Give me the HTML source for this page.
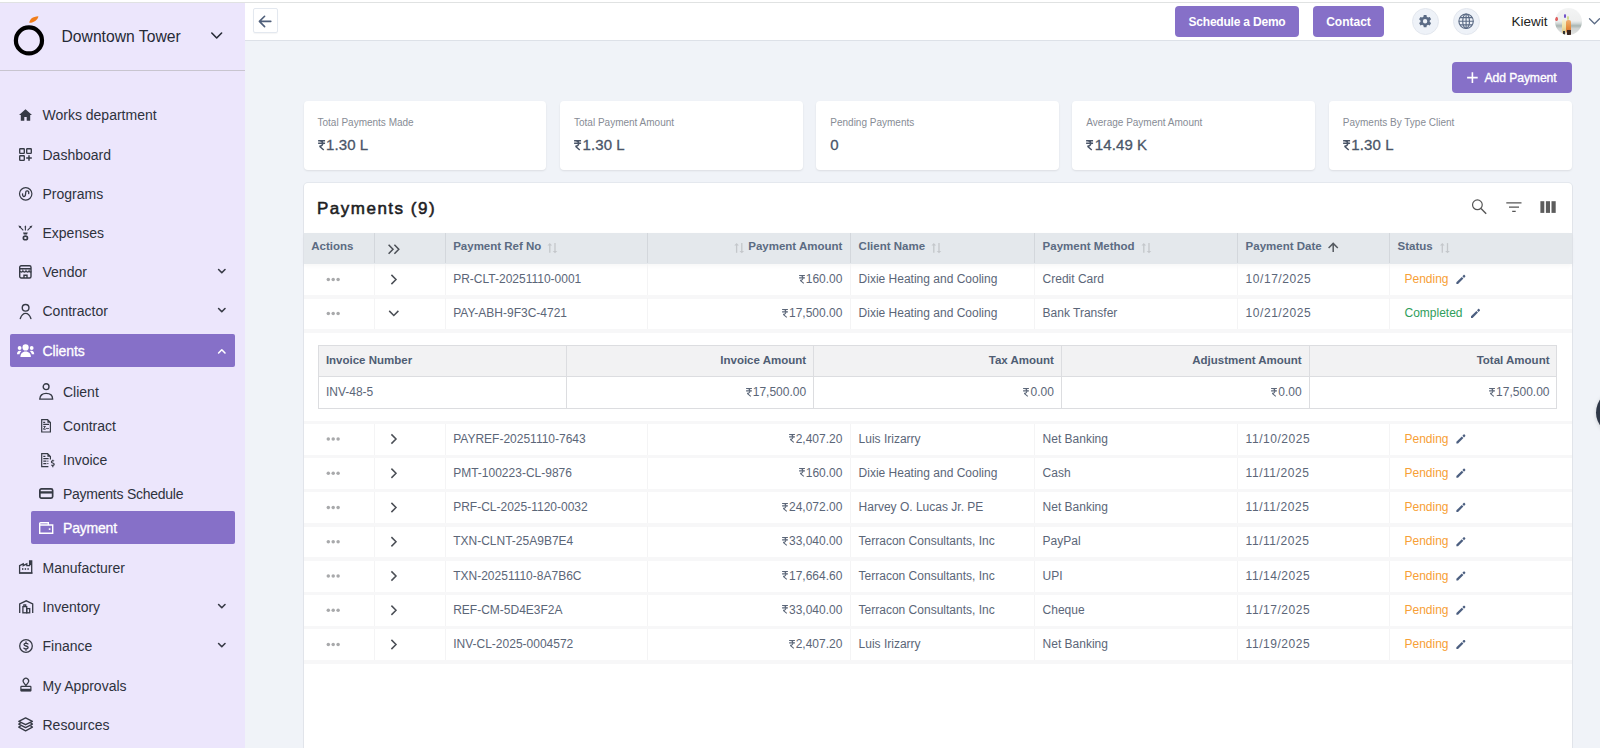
<!DOCTYPE html><html><head><meta charset="utf-8"><style>
*{box-sizing:border-box;margin:0;padding:0}
html,body{width:1600px;height:748px;overflow:hidden;background:#f0f3f8;font-family:"Liberation Sans",sans-serif}
.a{position:absolute;white-space:nowrap}
svg{position:absolute;overflow:visible}
svg.rs{position:static;display:inline-block;vertical-align:baseline}
#topline{position:absolute;left:0;top:0;width:1600px;height:3px;background:#fff;border-bottom:1px solid #e0e2e2}
#side{position:absolute;left:0;top:3px;width:245px;height:745px;background:#ece6fc}
#sidehead{position:absolute;left:0;top:0;width:245px;height:68px;border-bottom:1px solid #c8c5cf}
.mt{font-size:14px;color:#2e323d;line-height:16px}
#topbar{position:absolute;left:245px;top:3px;width:1355px;height:38px;background:#fff;border-bottom:1px solid #dde1e8}
.btn{position:absolute;background:#8670c8;color:#fff;border-radius:4px;font-weight:bold;font-size:12px;text-align:center;white-space:nowrap}
.card{position:absolute;top:101.3px;height:68.8px;width:242.8px;background:#fff;border-radius:4px;box-shadow:0 1px 2px rgba(0,0,0,.09)}
.card .l{position:absolute;left:14px;top:15.8px;font-size:10px;color:#878c95;letter-spacing:0px;line-height:12px}
.card .v{position:absolute;left:14px;top:35px;font-size:15px;color:#4a5568;line-height:18px;letter-spacing:0.1px;-webkit-text-stroke:0.3px #4a5568}
#panel{position:absolute;left:303.6px;top:183.3px;width:1268.2px;height:600px;background:#fff;border-radius:4px;box-shadow:0 0 0 1px rgba(20,30,50,.05),0 1px 2px rgba(0,0,0,.07)}
.th{font-size:11.5px;font-weight:bold;color:#5b6b82;line-height:14px}
.td{font-size:12px;color:#5b6678;line-height:14px}
</style></head><body>
<div id="topline"></div>
<div id="side"><div id="sidehead"></div></div>
<div id="topbar"></div>
<svg style="left:0;top:0" width="60" height="70"><circle cx="28.95" cy="40.4" r="13.05" fill="none" stroke="#000" stroke-width="4.2"/><path d="M29.3 22.8 C29.6 19.4 32.4 16.4 38.4 16.2 C37.8 19.6 34.4 22.6 29.3 22.8Z" fill="#f07d1a"/></svg>
<div class="a" style="left:61.5px;top:27.5px;font-size:15.7px;color:#262a36;line-height:18px">Downtown Tower</div>
<svg style="left:0;top:0" width="245" height="70"><path d="M211.8 33 L216.7 38 L221.6 33" fill="none" stroke="#262a36" stroke-width="1.6" stroke-linecap="round" stroke-linejoin="round"/></svg>
<div class="a mt" style="left:42.5px;top:107px">Works department</div>
<svg style="left:19px;top:109px" width="16" height="16" viewBox="0 0 16 16"><path d="M6.5 0.2 L0 6 L1.8 6 L1.8 11.7 L5.3 11.7 L5.3 8 L7.7 8 L7.7 11.7 L11.2 11.7 L11.2 6 L13 6 Z" fill="#363a45"/></svg>
<div class="a mt" style="left:42.5px;top:147px">Dashboard</div>
<svg style="left:19px;top:148px" width="16" height="16" viewBox="0 0 16 16"><g fill="none" stroke="#363a45" stroke-width="1.35"><rect x="0.7" y="0.7" width="4.6" height="4.6" rx="0.6"/><rect x="7.7" y="0.7" width="4.6" height="4.6" rx="0.6"/><rect x="0.7" y="7.7" width="4.6" height="4.6" rx="0.6"/><path d="M10 7.2 V12.8 M7.2 10 H12.8" stroke-width="1.5"/></g></svg>
<div class="a mt" style="left:42.5px;top:186px">Programs</div>
<svg style="left:18.8px;top:186.5px" width="16" height="16" viewBox="0 0 16 16"><circle cx="6.7" cy="6.85" r="6.2" fill="none" stroke="#363a45" stroke-width="1.2"/><path d="M3.6 6.9 C3.1 10.1 6.3 10.5 6.5 7.4 L6.8 5 C7 3.3 10.3 3 9.7 6.6" fill="none" stroke="#363a45" stroke-width="1.3" stroke-linecap="round"/></svg>
<div class="a mt" style="left:42.5px;top:225px">Expenses</div>
<svg style="left:18.2px;top:224.3px" width="16" height="16" viewBox="0 0 16 16"><g stroke="#363a45" stroke-width="1.1" fill="none"><path d="M5.3 6.3 L1.6 2.6 M7.4 6.4 V2.6 M9.5 6.3 L13.2 2.6"/></g><g fill="#363a45"><path d="M0.3 1.4 L3.4 2.2 L1.6 3.9Z"/><path d="M14.5 1.4 L11.4 2.2 L13.2 3.9Z"/><path d="M7.4 1.3 L8.4 3.2 L6.4 3.2Z"/><path d="M5 8.6 H9.8 L9 10.4 H5.8Z"/></g><ellipse cx="7.4" cy="13.9" rx="2.1" ry="1.8" fill="none" stroke="#363a45" stroke-width="1.6"/></svg>
<div class="a mt" style="left:42.5px;top:264px">Vendor</div>
<svg style="left:19.1px;top:265.2px" width="16" height="16" viewBox="0 0 16 16"><g fill="none" stroke="#363a45" stroke-width="1.4"><rect x="0.7" y="0.7" width="11.3" height="12.3" rx="1.5"/><path d="M0.7 3.8 H12 M0.9 6 C1.5 7.4 3.3 7.4 3.9 6 C4.6 7.4 6.4 7.4 7 6 C7.7 7.4 9.5 7.4 10.1 6 C10.7 7.4 11.8 7.2 12 6.3 M5 13 V10.2 H8 V13"/></g></svg>
<svg style="left:0;top:0" width="245" height="748"><path d="M218.6 269.5 L221.8 272.7 L225 269.5" fill="none" stroke="#363a45" stroke-width="1.6" stroke-linecap="round" stroke-linejoin="round"/></svg>
<div class="a mt" style="left:42.5px;top:303px">Contractor</div>
<svg style="left:20px;top:303.5px" width="16" height="16" viewBox="0 0 16 16"><g fill="none" stroke="#363a45" stroke-width="1.4" stroke-linecap="round"><circle cx="5.6" cy="3.8" r="3.35"/><path d="M0.3 14.5 C1.5 11 4 9.4 5.6 9.4 C7.2 9.4 9.7 11 10.9 14.5"/></g></svg>
<svg style="left:0;top:0" width="245" height="748"><path d="M218.6 308.5 L221.8 311.7 L225 308.5" fill="none" stroke="#363a45" stroke-width="1.6" stroke-linecap="round" stroke-linejoin="round"/></svg>
<div class="a mt" style="left:42.5px;top:560px">Manufacturer</div>
<svg style="left:18.8px;top:560.2px" width="16" height="16" viewBox="0 0 16 16"><g fill="none" stroke="#363a45" stroke-width="1.3"><path d="M0.6 13 V5.6 L4.2 3.8 V5.6 L7.8 3.8 V5.6 H10.6 V1 H12.7 V13 Z"/></g><path d="M0 12.5 H13.6 V13.5 H0 Z" fill="#363a45"/><rect x="3" y="8.2" width="1.4" height="1.6" fill="#363a45"/><rect x="5.7" y="8.2" width="1.4" height="1.6" fill="#363a45"/><rect x="8.4" y="8.2" width="1.4" height="1.6" fill="#363a45"/><path d="M10.6 1 L12.7 1 L12.7 5 L10.6 5Z" fill="#363a45"/></svg>
<div class="a mt" style="left:42.5px;top:599px">Inventory</div>
<svg style="left:18.5px;top:599.8px" width="16" height="16" viewBox="0 0 16 16"><g fill="none" stroke="#363a45" stroke-width="1.3"><path d="M0.7 13 V3.8 L7.2 0.8 L13.7 3.8 V13"/><rect x="3.9" y="6.6" width="3.8" height="6.2"/><rect x="7.7" y="8.6" width="3" height="4.2"/><path d="M4.9 6.6 V4.9 H6.7 V6.6"/></g></svg>
<svg style="left:0;top:0" width="245" height="748"><path d="M218.6 604.5 L221.8 607.7 L225 604.5" fill="none" stroke="#363a45" stroke-width="1.6" stroke-linecap="round" stroke-linejoin="round"/></svg>
<div class="a mt" style="left:42.5px;top:638px">Finance</div>
<svg style="left:18.5px;top:638.5px" width="16" height="16" viewBox="0 0 16 16"><circle cx="7" cy="7" r="6.3" fill="none" stroke="#363a45" stroke-width="1.3"/><path d="M9 5 C8.6 4.2 5 3.8 5 5.6 C5 7.4 9.1 6.6 9.1 8.5 C9.1 10.2 5.4 10 4.9 9.1 M7 2.8 V4 M7 10.1 V11.3" fill="none" stroke="#363a45" stroke-width="1.3" stroke-linecap="round"/></svg>
<svg style="left:0;top:0" width="245" height="748"><path d="M218.6 643.5 L221.8 646.7 L225 643.5" fill="none" stroke="#363a45" stroke-width="1.6" stroke-linecap="round" stroke-linejoin="round"/></svg>
<div class="a mt" style="left:42.5px;top:678px">My Approvals</div>
<svg style="left:19.9px;top:677.9px" width="16" height="16" viewBox="0 0 16 16"><path d="M5.9 7.6 L3.7 4.7 A2.75 2.75 0 1 1 8.1 4.7 Z" fill="none" stroke="#363a45" stroke-width="1.2" stroke-linejoin="round"/><rect x="0.9" y="8.4" width="10" height="4.6" rx="0.5" fill="none" stroke="#363a45" stroke-width="1.2"/><rect x="0.9" y="10.8" width="10" height="2.4" fill="#363a45"/></svg>
<div class="a mt" style="left:42.5px;top:717px">Resources</div>
<svg style="left:18px;top:716.5px" width="16" height="16" viewBox="0 0 16 16"><g fill="none" stroke="#363a45" stroke-width="1.4" stroke-linejoin="round"><path d="M7.6 0.9 L14.4 4.3 L7.6 7.7 L0.8 4.3 Z"/><path d="M2.6 5.9 L0.8 7.1 L7.6 10.6 L14.4 7.1 L12.6 5.9"/><path d="M2.6 8.9 L0.8 10.1 L7.6 13.8 L14.4 10.1 L12.6 8.9"/></g></svg>
<div class="a" style="left:10.2px;top:333.8px;width:225px;height:33.4px;background:#8670c8;border-radius:2px"></div>
<div class="a mt" style="left:42.5px;top:343px;color:#fff;-webkit-text-stroke:0.3px #fff;letter-spacing:-0.1px">Clients</div>
<svg style="left:16.9px;top:343.9px" width="16" height="16" viewBox="0 0 16 16"><g fill="#fff"><circle cx="8.6" cy="3.4" r="3.1"/><path d="M3.4 12.9 C3.4 9.7 5.4 7.4 8.6 7.4 C11.8 7.4 13.9 9.7 13.9 12.9Z"/><circle cx="2.6" cy="4" r="1.9"/><circle cx="14.7" cy="4" r="1.9"/><path d="M0 10.3 C0 8 1 6.8 2.6 6.8 C3.6 6.8 4 7.1 4.2 7.3 C3.2 8.2 2.6 9.2 2.5 10.3Z"/><path d="M17.2 10.3 C17.2 8 16.2 6.8 14.7 6.8 C13.7 6.8 13.3 7.1 13 7.3 C14 8.2 14.7 9.2 14.8 10.3Z"/></g></svg>
<svg style="left:0;top:0" width="245" height="748"><path d="M218.6 353 L221.8 349.8 L225 353" fill="none" stroke="#fff" stroke-width="1.6" stroke-linecap="round" stroke-linejoin="round"/></svg>
<div class="a mt" style="left:63px;top:384px">Client</div>
<svg style="left:39px;top:383.3px" width="16" height="16" viewBox="0 0 16 16"><g fill="none" stroke="#363a45" stroke-width="1.4"><circle cx="7.1" cy="3.7" r="2.9"/><path d="M0.8 16.1 C0.8 12.4 3.4 10.4 7.1 10.4 C10.8 10.4 13.6 12.4 13.6 16.1 Z"/></g></svg>
<div class="a mt" style="left:63px;top:418px">Contract</div>
<svg style="left:41px;top:419px" width="16" height="16" viewBox="0 0 16 16"><g fill="none" stroke="#363a45" stroke-width="1.2"><path d="M0.7 0.7 H6.6 L9.4 3.5 V13 H0.7 Z"/><path d="M2.2 3.3 H4.2 M2.2 5.3 H8"/><path d="M2.4 7.4 H4.4 L2.4 10.2 H4.6 C5.2 9.2 5.8 9.2 6 9.9 C6.4 9.4 7 9.3 7.8 9.5" stroke-width="1"/></g><path d="M6.4 0.7 L9.4 3.7 L6.4 3.7Z" fill="#363a45"/></svg>
<div class="a mt" style="left:63px;top:452px">Invoice</div>
<svg style="left:40.8px;top:452.9px" width="16" height="16" viewBox="0 0 16 16"><g fill="none" stroke="#363a45" stroke-width="1.2"><path d="M9.4 6.6 V3.5 L6.6 0.7 H0.7 V13.6 H7.4"/><path d="M2.3 3.4 H4.4 M2.3 5.6 H7.6 M2.3 8.2 H5.4 M2.3 10.6 H5.4"/><path d="M13 8.2 C12.6 7.6 10.4 7.5 10.4 8.9 C10.4 10.2 13.2 9.9 13.2 11.3 C13.2 12.6 11 12.6 10.3 11.9 M11.8 6.8 V7.6 M11.8 12.6 V14.2"/></g><path d="M6.4 0.7 L9.4 3.7 L6.4 3.7Z" fill="#363a45"/><rect x="6.3" y="7.6" width="1.1" height="1.1" fill="#363a45"/><rect x="6.3" y="10" width="1.1" height="1.1" fill="#363a45"/></svg>
<div class="a mt" style="left:63px;top:486px;letter-spacing:-0.25px">Payments Schedule</div>
<svg style="left:38.9px;top:488px" width="16" height="16" viewBox="0 0 16 16"><g fill="none" stroke="#363a45" stroke-width="1.7"><rect x="0.85" y="0.85" width="12.8" height="9.3" rx="1.6"/><path d="M0.9 4.4 H13.6" stroke-width="2.3"/></g></svg>
<div class="a" style="left:31px;top:511.1px;width:204.2px;height:33.4px;background:#8670c8;border-radius:2px"></div>
<div class="a mt" style="left:63px;top:520px;color:#fff;-webkit-text-stroke:0.3px #fff;letter-spacing:-0.2px">Payment</div>
<svg style="left:38.9px;top:521.6px" width="16" height="16" viewBox="0 0 16 16"><g fill="none" stroke="#fff" stroke-width="1.4"><path d="M0.7 3 H13.7 V11.3 H0.7 Z"/><path d="M0.7 3 V1.6 C0.7 1 1 0.7 1.6 0.7 H9.3 V3"/></g><rect x="9.8" y="6.3" width="1.6" height="1.6" fill="#fff"/></svg>
<div class="a" style="left:252.6px;top:8.4px;width:25px;height:25px;border:1px solid #e3e8ef;border-radius:2px;box-shadow:0 1px 1px rgba(0,0,0,.04)"></div>
<svg style="left:0;top:0" width="300" height="45"><path d="M270.8 21.4 H259.8 M264.6 16.3 L259.4 21.4 L264.6 26.6" fill="none" stroke="#4f5f7a" stroke-width="1.6" stroke-linecap="round" stroke-linejoin="round"/></svg>
<div class="btn" style="left:1175px;top:6px;width:124px;height:30.5px;line-height:32px;letter-spacing:-0.2px">Schedule a Demo</div>
<div class="btn" style="left:1313px;top:6px;width:71px;height:30.5px;line-height:32px">Contact</div>
<div class="a" style="left:1411.7px;top:7.5px;width:27.2px;height:27.2px;border-radius:50%;background:#eef2f8;border:1px solid #e3e7ee"></div>
<div class="a" style="left:1452.5px;top:7.5px;width:27.2px;height:27.2px;border-radius:50%;background:#eef2f8;border:1px solid #e3e7ee"></div>
<svg style="left:0;top:0" width="1600" height="45"><path d="M1423.73 15.05 L1426.47 15.05 L1426.76 16.80 L1428.08 17.57 L1429.74 16.94 L1431.11 19.32 L1429.74 20.43 L1429.74 21.97 L1431.11 23.08 L1429.74 25.46 L1428.08 24.83 L1426.76 25.60 L1426.47 27.35 L1423.73 27.35 L1423.44 25.60 L1422.12 24.83 L1420.46 25.46 L1419.09 23.08 L1420.46 21.97 L1420.46 20.43 L1419.09 19.32 L1420.46 16.94 L1422.12 17.57 L1423.44 16.80Z M1427.3 21.2 A2.2 2.2 0 1 0 1422.8999999999999 21.2 A2.2 2.2 0 1 0 1427.3 21.2Z" fill="#5b6b85" fill-rule="evenodd"/><g fill="none" stroke="#5b6b85" stroke-width="1.15"><circle cx="1466.1" cy="21.2" r="7.2"/><ellipse cx="1466.1" cy="21.2" rx="3.4" ry="7.2"/><path d="M1466.1 14 V28.4 M1458.9 21.2 H1473.3 M1459.9 17.6 H1472.3 M1459.9 24.8 H1472.3"/></g></svg>
<div class="a" style="left:1511.5px;top:13.6px;font-size:13.5px;color:#222;line-height:16px">Kiewit</div>
<div class="a" style="left:1554.8px;top:7.7px;width:27.3px;height:27.3px;border-radius:50%;overflow:hidden;background:linear-gradient(180deg,#f3f4f4 0%,#eeefef 48%,#d6dcdc 56%,#a9b5b2 66%,#cfd3d2 76%,#e6e6e4 100%)"><div class="a" style="left:7.5px;top:11px;width:4px;height:15px;background:linear-gradient(180deg,#f6f2d8,#efe2a8 50%,#d8c080);border-radius:2px"></div><div class="a" style="left:11.5px;top:12px;width:4.5px;height:13px;background:linear-gradient(180deg,#f0b070,#e4893a 60%,#d0703a);border-radius:2px"></div><div class="a" style="left:9px;top:6px;width:2.5px;height:4px;background:#7050c8;border-radius:50%"></div><div class="a" style="left:12px;top:8px;width:2.5px;height:4px;background:#d2dc90;border-radius:50%"></div><div class="a" style="left:8px;top:23px;width:2px;height:6px;background:#333"></div><div class="a" style="left:12px;top:22px;width:4px;height:7px;background:#3a241c"></div><div class="a" style="left:0.5px;top:9.5px;width:2.5px;height:3.5px;background:#e06060;border-radius:50%"></div></div>
<svg style="left:0;top:0" width="1600" height="45"><path d="M1589.5 18.8 L1594.5 23.8 L1599.5 18.8" fill="none" stroke="#5b6b85" stroke-width="1.3" stroke-linecap="round" stroke-linejoin="round"/></svg>
<div class="btn" style="left:1452px;top:62px;width:120px;height:30.5px"></div>
<svg style="left:0;top:0" width="1600" height="100"><path d="M1472.4 72.3 V82.9 M1467.1 77.6 H1477.7" stroke="#fff" stroke-width="1.6"/></svg>
<div class="a" style="left:1484.5px;top:70px;font-size:12.2px;color:#fff;line-height:16px;letter-spacing:-0.1px;-webkit-text-stroke:0.35px #fff">Add Payment</div>
<div class="card" style="left:303.5px"><div class="l">Total Payments Made</div><div class="v"><svg class="rs" width="7.2" height="10.0" viewBox="0 0 6 8.5" preserveAspectRatio="none" style="margin-right:1.3px"><path d="M0.1 0.55 H5.9 M0.1 2.85 H5.9 M1.3 0.55 C4.7 0.55 5 5.3 1.1 5.3 M1.2 5.3 L4.8 8.45" fill="none" stroke="currentColor" stroke-width="1.25"/></svg>1.30 L</div></div>
<div class="card" style="left:560px"><div class="l">Total Payment Amount</div><div class="v"><svg class="rs" width="7.2" height="10.0" viewBox="0 0 6 8.5" preserveAspectRatio="none" style="margin-right:1.3px"><path d="M0.1 0.55 H5.9 M0.1 2.85 H5.9 M1.3 0.55 C4.7 0.55 5 5.3 1.1 5.3 M1.2 5.3 L4.8 8.45" fill="none" stroke="currentColor" stroke-width="1.25"/></svg>1.30 L</div></div>
<div class="card" style="left:816.3px"><div class="l">Pending Payments</div><div class="v">0</div></div>
<div class="card" style="left:1072.3px"><div class="l">Average Payment Amount</div><div class="v"><svg class="rs" width="7.2" height="10.0" viewBox="0 0 6 8.5" preserveAspectRatio="none" style="margin-right:1.3px"><path d="M0.1 0.55 H5.9 M0.1 2.85 H5.9 M1.3 0.55 C4.7 0.55 5 5.3 1.1 5.3 M1.2 5.3 L4.8 8.45" fill="none" stroke="currentColor" stroke-width="1.25"/></svg>14.49 K</div></div>
<div class="card" style="left:1328.8px"><div class="l">Payments By Type Client</div><div class="v"><svg class="rs" width="7.2" height="10.0" viewBox="0 0 6 8.5" preserveAspectRatio="none" style="margin-right:1.3px"><path d="M0.1 0.55 H5.9 M0.1 2.85 H5.9 M1.3 0.55 C4.7 0.55 5 5.3 1.1 5.3 M1.2 5.3 L4.8 8.45" fill="none" stroke="currentColor" stroke-width="1.25"/></svg>1.30 L</div></div>
<div id="panel"></div>
<div class="a" style="left:317px;top:198px;font-size:17px;font-weight:normal;-webkit-text-stroke:0.55px #1d1d1f;color:#1d1d1f;line-height:22px;letter-spacing:1.5px">Payments (9)</div>
<div class="a" style="left:303.5px;top:233.3px;width:1268.3px;height:30.4px;background:#e4e8ec;box-shadow:0 2px 4px rgba(0,0,0,.035)"></div>
<div class="a" style="left:373.7px;top:233.3px;width:1px;height:30.2px;background:#d3d7dc"></div>
<div class="a" style="left:444.5px;top:233.3px;width:1px;height:30.2px;background:#d3d7dc"></div>
<div class="a" style="left:647.1px;top:233.3px;width:1px;height:30.2px;background:#d3d7dc"></div>
<div class="a" style="left:850.1px;top:233.3px;width:1px;height:30.2px;background:#d3d7dc"></div>
<div class="a" style="left:1033.8px;top:233.3px;width:1px;height:30.2px;background:#d3d7dc"></div>
<div class="a" style="left:1236.8px;top:233.3px;width:1px;height:30.2px;background:#d3d7dc"></div>
<div class="a" style="left:1388.9px;top:233.3px;width:1px;height:30.2px;background:#d3d7dc"></div>
<div class="a th" style="left:311.2px;top:239.4px">Actions</div>
<div class="a th" style="left:453.2px;top:239.4px">Payment Ref No</div>
<div class="a th" style="right:757.6px;top:239.4px">Payment Amount</div>
<div class="a th" style="left:858.6px;top:239.4px">Client Name</div>
<div class="a th" style="left:1042.6px;top:239.4px">Payment Method</div>
<div class="a th" style="left:1245.6px;top:239.4px">Payment Date</div>
<div class="a th" style="left:1397.5px;top:239.4px">Status</div>
<svg style="left:0;top:0" width="1600" height="748"><path d="M549.8 252.8 V244.5" stroke="#c4c7cb" stroke-width="1.3"/><path d="M547.5 245.5 L549.8 243.1 L552.1 245.5Z" fill="#c4c7cb"/><path d="M555.0 243.1 V251.7" stroke="#c4c7cb" stroke-width="1.3"/><path d="M552.7 250.9 L555.0 253.3 L557.3 250.9Z" fill="#c4c7cb"/><path d="M736.5999999999999 252.8 V244.5" stroke="#c4c7cb" stroke-width="1.3"/><path d="M734.3 245.5 L736.5999999999999 243.1 L738.9 245.5Z" fill="#c4c7cb"/><path d="M741.8 243.1 V251.7" stroke="#c4c7cb" stroke-width="1.3"/><path d="M739.5 250.9 L741.8 253.3 L744.0999999999999 250.9Z" fill="#c4c7cb"/><path d="M933.8 252.8 V244.5" stroke="#c4c7cb" stroke-width="1.3"/><path d="M931.5 245.5 L933.8 243.1 L936.1 245.5Z" fill="#c4c7cb"/><path d="M939.0 243.1 V251.7" stroke="#c4c7cb" stroke-width="1.3"/><path d="M936.7 250.9 L939.0 253.3 L941.3 250.9Z" fill="#c4c7cb"/><path d="M1143.8 252.8 V244.5" stroke="#c4c7cb" stroke-width="1.3"/><path d="M1141.5 245.5 L1143.8 243.1 L1146.1 245.5Z" fill="#c4c7cb"/><path d="M1149.0 243.1 V251.7" stroke="#c4c7cb" stroke-width="1.3"/><path d="M1146.7 250.9 L1149.0 253.3 L1151.3 250.9Z" fill="#c4c7cb"/><path d="M1442.3 252.8 V244.5" stroke="#c4c7cb" stroke-width="1.3"/><path d="M1440 245.5 L1442.3 243.1 L1444.6 245.5Z" fill="#c4c7cb"/><path d="M1447.5 243.1 V251.7" stroke="#c4c7cb" stroke-width="1.3"/><path d="M1445.2 250.9 L1447.5 253.3 L1449.8 250.9Z" fill="#c4c7cb"/><path d="M1333.2 252 V243.4 M1328.6 248 L1333.2 243.4 L1337.8 248" fill="none" stroke="#555a60" stroke-width="1.5"/><path d="M388.6 244.8 L393 249.3 L388.6 253.8 M394.4 244.8 L398.8 249.3 L394.4 253.8" fill="none" stroke="#4a4e55" stroke-width="1.5"/></svg>
<div class="a" style="left:303.5px;top:295px;width:1268.3px;height:3.5px;background:#f7f7f8"></div>
<div class="a" style="left:373.7px;top:264px;width:1.2px;height:31px;background:#f4f4f5"></div>
<div class="a" style="left:444.5px;top:264px;width:1.2px;height:31px;background:#f4f4f5"></div>
<div class="a" style="left:647.1px;top:264px;width:1.2px;height:31px;background:#f4f4f5"></div>
<div class="a" style="left:850.1px;top:264px;width:1.2px;height:31px;background:#f4f4f5"></div>
<div class="a" style="left:1033.8px;top:264px;width:1.2px;height:31px;background:#f4f4f5"></div>
<div class="a" style="left:1236.8px;top:264px;width:1.2px;height:31px;background:#f4f4f5"></div>
<div class="a" style="left:1388.9px;top:264px;width:1.2px;height:31px;background:#f4f4f5"></div>
<div class="a td" style="left:453.2px;top:272.1px">PR-CLT-20251110-0001</div>
<div class="a td" style="right:757.6px;top:272.1px"><svg class="rs" width="6.0" height="8.5" viewBox="0 0 6 8.5" preserveAspectRatio="none" style="margin-right:1.2px"><path d="M0.1 0.55 H5.9 M0.1 2.85 H5.9 M1.3 0.55 C4.7 0.55 5 5.3 1.1 5.3 M1.2 5.3 L4.8 8.45" fill="none" stroke="currentColor" stroke-width="1.05"/></svg>160.00</div>
<div class="a td" style="left:858.6px;top:272.1px">Dixie Heating and Cooling</div>
<div class="a td" style="left:1042.6px;top:272.1px">Credit Card</div>
<div class="a td" style="left:1245.6px;top:272.1px;letter-spacing:0.55px">10/17/2025</div>
<div class="a td" style="left:1404.5px;top:272.1px;color:#f7a035">Pending</div>
<div class="a" style="left:303.5px;top:329px;width:1268.3px;height:3.5px;background:#f7f7f8"></div>
<div class="a" style="left:373.7px;top:298px;width:1.2px;height:31px;background:#f4f4f5"></div>
<div class="a" style="left:444.5px;top:298px;width:1.2px;height:31px;background:#f4f4f5"></div>
<div class="a" style="left:647.1px;top:298px;width:1.2px;height:31px;background:#f4f4f5"></div>
<div class="a" style="left:850.1px;top:298px;width:1.2px;height:31px;background:#f4f4f5"></div>
<div class="a" style="left:1033.8px;top:298px;width:1.2px;height:31px;background:#f4f4f5"></div>
<div class="a" style="left:1236.8px;top:298px;width:1.2px;height:31px;background:#f4f4f5"></div>
<div class="a" style="left:1388.9px;top:298px;width:1.2px;height:31px;background:#f4f4f5"></div>
<div class="a td" style="left:453.2px;top:306.1px">PAY-ABH-9F3C-4721</div>
<div class="a td" style="right:757.6px;top:306.1px"><svg class="rs" width="6.0" height="8.5" viewBox="0 0 6 8.5" preserveAspectRatio="none" style="margin-right:1.2px"><path d="M0.1 0.55 H5.9 M0.1 2.85 H5.9 M1.3 0.55 C4.7 0.55 5 5.3 1.1 5.3 M1.2 5.3 L4.8 8.45" fill="none" stroke="currentColor" stroke-width="1.05"/></svg>17,500.00</div>
<div class="a td" style="left:858.6px;top:306.1px">Dixie Heating and Cooling</div>
<div class="a td" style="left:1042.6px;top:306.1px">Bank Transfer</div>
<div class="a td" style="left:1245.6px;top:306.1px;letter-spacing:0.55px">10/21/2025</div>
<div class="a td" style="left:1404.5px;top:306.1px;color:#2f9e5b">Completed</div>
<div class="a" style="left:303.5px;top:454.5px;width:1268.3px;height:3.5px;background:#f7f7f8"></div>
<div class="a" style="left:373.7px;top:423.5px;width:1.2px;height:31px;background:#f4f4f5"></div>
<div class="a" style="left:444.5px;top:423.5px;width:1.2px;height:31px;background:#f4f4f5"></div>
<div class="a" style="left:647.1px;top:423.5px;width:1.2px;height:31px;background:#f4f4f5"></div>
<div class="a" style="left:850.1px;top:423.5px;width:1.2px;height:31px;background:#f4f4f5"></div>
<div class="a" style="left:1033.8px;top:423.5px;width:1.2px;height:31px;background:#f4f4f5"></div>
<div class="a" style="left:1236.8px;top:423.5px;width:1.2px;height:31px;background:#f4f4f5"></div>
<div class="a" style="left:1388.9px;top:423.5px;width:1.2px;height:31px;background:#f4f4f5"></div>
<div class="a td" style="left:453.2px;top:431.6px">PAYREF-20251110-7643</div>
<div class="a td" style="right:757.6px;top:431.6px"><svg class="rs" width="6.0" height="8.5" viewBox="0 0 6 8.5" preserveAspectRatio="none" style="margin-right:1.2px"><path d="M0.1 0.55 H5.9 M0.1 2.85 H5.9 M1.3 0.55 C4.7 0.55 5 5.3 1.1 5.3 M1.2 5.3 L4.8 8.45" fill="none" stroke="currentColor" stroke-width="1.05"/></svg>2,407.20</div>
<div class="a td" style="left:858.6px;top:431.6px">Luis Irizarry</div>
<div class="a td" style="left:1042.6px;top:431.6px">Net Banking</div>
<div class="a td" style="left:1245.6px;top:431.6px;letter-spacing:0.55px">11/10/2025</div>
<div class="a td" style="left:1404.5px;top:431.6px;color:#f7a035">Pending</div>
<div class="a" style="left:303.5px;top:488.75px;width:1268.3px;height:3.5px;background:#f7f7f8"></div>
<div class="a" style="left:373.7px;top:457.75px;width:1.2px;height:31px;background:#f4f4f5"></div>
<div class="a" style="left:444.5px;top:457.75px;width:1.2px;height:31px;background:#f4f4f5"></div>
<div class="a" style="left:647.1px;top:457.75px;width:1.2px;height:31px;background:#f4f4f5"></div>
<div class="a" style="left:850.1px;top:457.75px;width:1.2px;height:31px;background:#f4f4f5"></div>
<div class="a" style="left:1033.8px;top:457.75px;width:1.2px;height:31px;background:#f4f4f5"></div>
<div class="a" style="left:1236.8px;top:457.75px;width:1.2px;height:31px;background:#f4f4f5"></div>
<div class="a" style="left:1388.9px;top:457.75px;width:1.2px;height:31px;background:#f4f4f5"></div>
<div class="a td" style="left:453.2px;top:465.85px">PMT-100223-CL-9876</div>
<div class="a td" style="right:757.6px;top:465.85px"><svg class="rs" width="6.0" height="8.5" viewBox="0 0 6 8.5" preserveAspectRatio="none" style="margin-right:1.2px"><path d="M0.1 0.55 H5.9 M0.1 2.85 H5.9 M1.3 0.55 C4.7 0.55 5 5.3 1.1 5.3 M1.2 5.3 L4.8 8.45" fill="none" stroke="currentColor" stroke-width="1.05"/></svg>160.00</div>
<div class="a td" style="left:858.6px;top:465.85px">Dixie Heating and Cooling</div>
<div class="a td" style="left:1042.6px;top:465.85px">Cash</div>
<div class="a td" style="left:1245.6px;top:465.85px;letter-spacing:0.55px">11/11/2025</div>
<div class="a td" style="left:1404.5px;top:465.85px;color:#f7a035">Pending</div>
<div class="a" style="left:303.5px;top:523px;width:1268.3px;height:3.5px;background:#f7f7f8"></div>
<div class="a" style="left:373.7px;top:492px;width:1.2px;height:31px;background:#f4f4f5"></div>
<div class="a" style="left:444.5px;top:492px;width:1.2px;height:31px;background:#f4f4f5"></div>
<div class="a" style="left:647.1px;top:492px;width:1.2px;height:31px;background:#f4f4f5"></div>
<div class="a" style="left:850.1px;top:492px;width:1.2px;height:31px;background:#f4f4f5"></div>
<div class="a" style="left:1033.8px;top:492px;width:1.2px;height:31px;background:#f4f4f5"></div>
<div class="a" style="left:1236.8px;top:492px;width:1.2px;height:31px;background:#f4f4f5"></div>
<div class="a" style="left:1388.9px;top:492px;width:1.2px;height:31px;background:#f4f4f5"></div>
<div class="a td" style="left:453.2px;top:500.1px">PRF-CL-2025-1120-0032</div>
<div class="a td" style="right:757.6px;top:500.1px"><svg class="rs" width="6.0" height="8.5" viewBox="0 0 6 8.5" preserveAspectRatio="none" style="margin-right:1.2px"><path d="M0.1 0.55 H5.9 M0.1 2.85 H5.9 M1.3 0.55 C4.7 0.55 5 5.3 1.1 5.3 M1.2 5.3 L4.8 8.45" fill="none" stroke="currentColor" stroke-width="1.05"/></svg>24,072.00</div>
<div class="a td" style="left:858.6px;top:500.1px">Harvey O. Lucas Jr. PE</div>
<div class="a td" style="left:1042.6px;top:500.1px">Net Banking</div>
<div class="a td" style="left:1245.6px;top:500.1px;letter-spacing:0.55px">11/11/2025</div>
<div class="a td" style="left:1404.5px;top:500.1px;color:#f7a035">Pending</div>
<div class="a" style="left:303.5px;top:557.25px;width:1268.3px;height:3.5px;background:#f7f7f8"></div>
<div class="a" style="left:373.7px;top:526.25px;width:1.2px;height:31px;background:#f4f4f5"></div>
<div class="a" style="left:444.5px;top:526.25px;width:1.2px;height:31px;background:#f4f4f5"></div>
<div class="a" style="left:647.1px;top:526.25px;width:1.2px;height:31px;background:#f4f4f5"></div>
<div class="a" style="left:850.1px;top:526.25px;width:1.2px;height:31px;background:#f4f4f5"></div>
<div class="a" style="left:1033.8px;top:526.25px;width:1.2px;height:31px;background:#f4f4f5"></div>
<div class="a" style="left:1236.8px;top:526.25px;width:1.2px;height:31px;background:#f4f4f5"></div>
<div class="a" style="left:1388.9px;top:526.25px;width:1.2px;height:31px;background:#f4f4f5"></div>
<div class="a td" style="left:453.2px;top:534.35px">TXN-CLNT-25A9B7E4</div>
<div class="a td" style="right:757.6px;top:534.35px"><svg class="rs" width="6.0" height="8.5" viewBox="0 0 6 8.5" preserveAspectRatio="none" style="margin-right:1.2px"><path d="M0.1 0.55 H5.9 M0.1 2.85 H5.9 M1.3 0.55 C4.7 0.55 5 5.3 1.1 5.3 M1.2 5.3 L4.8 8.45" fill="none" stroke="currentColor" stroke-width="1.05"/></svg>33,040.00</div>
<div class="a td" style="left:858.6px;top:534.35px">Terracon Consultants, Inc</div>
<div class="a td" style="left:1042.6px;top:534.35px">PayPal</div>
<div class="a td" style="left:1245.6px;top:534.35px;letter-spacing:0.55px">11/11/2025</div>
<div class="a td" style="left:1404.5px;top:534.35px;color:#f7a035">Pending</div>
<div class="a" style="left:303.5px;top:591.5px;width:1268.3px;height:3.5px;background:#f7f7f8"></div>
<div class="a" style="left:373.7px;top:560.5px;width:1.2px;height:31px;background:#f4f4f5"></div>
<div class="a" style="left:444.5px;top:560.5px;width:1.2px;height:31px;background:#f4f4f5"></div>
<div class="a" style="left:647.1px;top:560.5px;width:1.2px;height:31px;background:#f4f4f5"></div>
<div class="a" style="left:850.1px;top:560.5px;width:1.2px;height:31px;background:#f4f4f5"></div>
<div class="a" style="left:1033.8px;top:560.5px;width:1.2px;height:31px;background:#f4f4f5"></div>
<div class="a" style="left:1236.8px;top:560.5px;width:1.2px;height:31px;background:#f4f4f5"></div>
<div class="a" style="left:1388.9px;top:560.5px;width:1.2px;height:31px;background:#f4f4f5"></div>
<div class="a td" style="left:453.2px;top:568.6px">TXN-20251110-8A7B6C</div>
<div class="a td" style="right:757.6px;top:568.6px"><svg class="rs" width="6.0" height="8.5" viewBox="0 0 6 8.5" preserveAspectRatio="none" style="margin-right:1.2px"><path d="M0.1 0.55 H5.9 M0.1 2.85 H5.9 M1.3 0.55 C4.7 0.55 5 5.3 1.1 5.3 M1.2 5.3 L4.8 8.45" fill="none" stroke="currentColor" stroke-width="1.05"/></svg>17,664.60</div>
<div class="a td" style="left:858.6px;top:568.6px">Terracon Consultants, Inc</div>
<div class="a td" style="left:1042.6px;top:568.6px">UPI</div>
<div class="a td" style="left:1245.6px;top:568.6px;letter-spacing:0.55px">11/14/2025</div>
<div class="a td" style="left:1404.5px;top:568.6px;color:#f7a035">Pending</div>
<div class="a" style="left:303.5px;top:625.75px;width:1268.3px;height:3.5px;background:#f7f7f8"></div>
<div class="a" style="left:373.7px;top:594.75px;width:1.2px;height:31px;background:#f4f4f5"></div>
<div class="a" style="left:444.5px;top:594.75px;width:1.2px;height:31px;background:#f4f4f5"></div>
<div class="a" style="left:647.1px;top:594.75px;width:1.2px;height:31px;background:#f4f4f5"></div>
<div class="a" style="left:850.1px;top:594.75px;width:1.2px;height:31px;background:#f4f4f5"></div>
<div class="a" style="left:1033.8px;top:594.75px;width:1.2px;height:31px;background:#f4f4f5"></div>
<div class="a" style="left:1236.8px;top:594.75px;width:1.2px;height:31px;background:#f4f4f5"></div>
<div class="a" style="left:1388.9px;top:594.75px;width:1.2px;height:31px;background:#f4f4f5"></div>
<div class="a td" style="left:453.2px;top:602.85px">REF-CM-5D4E3F2A</div>
<div class="a td" style="right:757.6px;top:602.85px"><svg class="rs" width="6.0" height="8.5" viewBox="0 0 6 8.5" preserveAspectRatio="none" style="margin-right:1.2px"><path d="M0.1 0.55 H5.9 M0.1 2.85 H5.9 M1.3 0.55 C4.7 0.55 5 5.3 1.1 5.3 M1.2 5.3 L4.8 8.45" fill="none" stroke="currentColor" stroke-width="1.05"/></svg>33,040.00</div>
<div class="a td" style="left:858.6px;top:602.85px">Terracon Consultants, Inc</div>
<div class="a td" style="left:1042.6px;top:602.85px">Cheque</div>
<div class="a td" style="left:1245.6px;top:602.85px;letter-spacing:0.55px">11/17/2025</div>
<div class="a td" style="left:1404.5px;top:602.85px;color:#f7a035">Pending</div>
<div class="a" style="left:303.5px;top:660px;width:1268.3px;height:3.5px;background:#f7f7f8"></div>
<div class="a" style="left:373.7px;top:629px;width:1.2px;height:31px;background:#f4f4f5"></div>
<div class="a" style="left:444.5px;top:629px;width:1.2px;height:31px;background:#f4f4f5"></div>
<div class="a" style="left:647.1px;top:629px;width:1.2px;height:31px;background:#f4f4f5"></div>
<div class="a" style="left:850.1px;top:629px;width:1.2px;height:31px;background:#f4f4f5"></div>
<div class="a" style="left:1033.8px;top:629px;width:1.2px;height:31px;background:#f4f4f5"></div>
<div class="a" style="left:1236.8px;top:629px;width:1.2px;height:31px;background:#f4f4f5"></div>
<div class="a" style="left:1388.9px;top:629px;width:1.2px;height:31px;background:#f4f4f5"></div>
<div class="a td" style="left:453.2px;top:637.1px">INV-CL-2025-0004572</div>
<div class="a td" style="right:757.6px;top:637.1px"><svg class="rs" width="6.0" height="8.5" viewBox="0 0 6 8.5" preserveAspectRatio="none" style="margin-right:1.2px"><path d="M0.1 0.55 H5.9 M0.1 2.85 H5.9 M1.3 0.55 C4.7 0.55 5 5.3 1.1 5.3 M1.2 5.3 L4.8 8.45" fill="none" stroke="currentColor" stroke-width="1.05"/></svg>2,407.20</div>
<div class="a td" style="left:858.6px;top:637.1px">Luis Irizarry</div>
<div class="a td" style="left:1042.6px;top:637.1px">Net Banking</div>
<div class="a td" style="left:1245.6px;top:637.1px;letter-spacing:0.55px">11/19/2025</div>
<div class="a td" style="left:1404.5px;top:637.1px;color:#f7a035">Pending</div>
<svg style="left:0;top:0" width="1600" height="748"><circle cx="328.3" cy="279.5" r="1.75" fill="#a8a9ab"/><circle cx="333.2" cy="279.5" r="1.75" fill="#a8a9ab"/><circle cx="338.1" cy="279.5" r="1.75" fill="#a8a9ab"/><path d="M391.4 274.9 L396 279.5 L391.4 284.1" fill="none" stroke="#4a4e55" stroke-width="1.5"/><g transform="translate(1456.4,274.9)"><path d="M0 7.4 L0 9 L1.6 9 L7 3.6 L5.4 2 Z" fill="#4c5f80"/><path d="M6 1.4 L7.2 0.2 C7.5 -0.1 7.9 -0.1 8.2 0.2 L8.8 0.8 C9.1 1.1 9.1 1.5 8.8 1.8 L7.6 3 Z" fill="#4c5f80"/></g><circle cx="328.3" cy="313.5" r="1.75" fill="#a8a9ab"/><circle cx="333.2" cy="313.5" r="1.75" fill="#a8a9ab"/><circle cx="338.1" cy="313.5" r="1.75" fill="#a8a9ab"/><path d="M389.2 310.9 L393.8 315.5 L398.4 310.9" fill="none" stroke="#4a4e55" stroke-width="1.5"/><g transform="translate(1471,308.9)"><path d="M0 7.4 L0 9 L1.6 9 L7 3.6 L5.4 2 Z" fill="#4c5f80"/><path d="M6 1.4 L7.2 0.2 C7.5 -0.1 7.9 -0.1 8.2 0.2 L8.8 0.8 C9.1 1.1 9.1 1.5 8.8 1.8 L7.6 3 Z" fill="#4c5f80"/></g><circle cx="328.3" cy="439.0" r="1.75" fill="#a8a9ab"/><circle cx="333.2" cy="439.0" r="1.75" fill="#a8a9ab"/><circle cx="338.1" cy="439.0" r="1.75" fill="#a8a9ab"/><path d="M391.4 434.4 L396 439.0 L391.4 443.6" fill="none" stroke="#4a4e55" stroke-width="1.5"/><g transform="translate(1456.4,434.4)"><path d="M0 7.4 L0 9 L1.6 9 L7 3.6 L5.4 2 Z" fill="#4c5f80"/><path d="M6 1.4 L7.2 0.2 C7.5 -0.1 7.9 -0.1 8.2 0.2 L8.8 0.8 C9.1 1.1 9.1 1.5 8.8 1.8 L7.6 3 Z" fill="#4c5f80"/></g><circle cx="328.3" cy="473.25" r="1.75" fill="#a8a9ab"/><circle cx="333.2" cy="473.25" r="1.75" fill="#a8a9ab"/><circle cx="338.1" cy="473.25" r="1.75" fill="#a8a9ab"/><path d="M391.4 468.65 L396 473.25 L391.4 477.85" fill="none" stroke="#4a4e55" stroke-width="1.5"/><g transform="translate(1456.4,468.65)"><path d="M0 7.4 L0 9 L1.6 9 L7 3.6 L5.4 2 Z" fill="#4c5f80"/><path d="M6 1.4 L7.2 0.2 C7.5 -0.1 7.9 -0.1 8.2 0.2 L8.8 0.8 C9.1 1.1 9.1 1.5 8.8 1.8 L7.6 3 Z" fill="#4c5f80"/></g><circle cx="328.3" cy="507.5" r="1.75" fill="#a8a9ab"/><circle cx="333.2" cy="507.5" r="1.75" fill="#a8a9ab"/><circle cx="338.1" cy="507.5" r="1.75" fill="#a8a9ab"/><path d="M391.4 502.9 L396 507.5 L391.4 512.1" fill="none" stroke="#4a4e55" stroke-width="1.5"/><g transform="translate(1456.4,502.9)"><path d="M0 7.4 L0 9 L1.6 9 L7 3.6 L5.4 2 Z" fill="#4c5f80"/><path d="M6 1.4 L7.2 0.2 C7.5 -0.1 7.9 -0.1 8.2 0.2 L8.8 0.8 C9.1 1.1 9.1 1.5 8.8 1.8 L7.6 3 Z" fill="#4c5f80"/></g><circle cx="328.3" cy="541.75" r="1.75" fill="#a8a9ab"/><circle cx="333.2" cy="541.75" r="1.75" fill="#a8a9ab"/><circle cx="338.1" cy="541.75" r="1.75" fill="#a8a9ab"/><path d="M391.4 537.15 L396 541.75 L391.4 546.35" fill="none" stroke="#4a4e55" stroke-width="1.5"/><g transform="translate(1456.4,537.15)"><path d="M0 7.4 L0 9 L1.6 9 L7 3.6 L5.4 2 Z" fill="#4c5f80"/><path d="M6 1.4 L7.2 0.2 C7.5 -0.1 7.9 -0.1 8.2 0.2 L8.8 0.8 C9.1 1.1 9.1 1.5 8.8 1.8 L7.6 3 Z" fill="#4c5f80"/></g><circle cx="328.3" cy="576.0" r="1.75" fill="#a8a9ab"/><circle cx="333.2" cy="576.0" r="1.75" fill="#a8a9ab"/><circle cx="338.1" cy="576.0" r="1.75" fill="#a8a9ab"/><path d="M391.4 571.4 L396 576.0 L391.4 580.6" fill="none" stroke="#4a4e55" stroke-width="1.5"/><g transform="translate(1456.4,571.4)"><path d="M0 7.4 L0 9 L1.6 9 L7 3.6 L5.4 2 Z" fill="#4c5f80"/><path d="M6 1.4 L7.2 0.2 C7.5 -0.1 7.9 -0.1 8.2 0.2 L8.8 0.8 C9.1 1.1 9.1 1.5 8.8 1.8 L7.6 3 Z" fill="#4c5f80"/></g><circle cx="328.3" cy="610.25" r="1.75" fill="#a8a9ab"/><circle cx="333.2" cy="610.25" r="1.75" fill="#a8a9ab"/><circle cx="338.1" cy="610.25" r="1.75" fill="#a8a9ab"/><path d="M391.4 605.65 L396 610.25 L391.4 614.85" fill="none" stroke="#4a4e55" stroke-width="1.5"/><g transform="translate(1456.4,605.65)"><path d="M0 7.4 L0 9 L1.6 9 L7 3.6 L5.4 2 Z" fill="#4c5f80"/><path d="M6 1.4 L7.2 0.2 C7.5 -0.1 7.9 -0.1 8.2 0.2 L8.8 0.8 C9.1 1.1 9.1 1.5 8.8 1.8 L7.6 3 Z" fill="#4c5f80"/></g><circle cx="328.3" cy="644.5" r="1.75" fill="#a8a9ab"/><circle cx="333.2" cy="644.5" r="1.75" fill="#a8a9ab"/><circle cx="338.1" cy="644.5" r="1.75" fill="#a8a9ab"/><path d="M391.4 639.9 L396 644.5 L391.4 649.1" fill="none" stroke="#4a4e55" stroke-width="1.5"/><g transform="translate(1456.4,639.9)"><path d="M0 7.4 L0 9 L1.6 9 L7 3.6 L5.4 2 Z" fill="#4c5f80"/><path d="M6 1.4 L7.2 0.2 C7.5 -0.1 7.9 -0.1 8.2 0.2 L8.8 0.8 C9.1 1.1 9.1 1.5 8.8 1.8 L7.6 3 Z" fill="#4c5f80"/></g></svg>
<div class="a" style="left:303.5px;top:420.5px;width:1268.3px;height:3px;background:#f7f7f8"></div>
<div class="a" style="left:318.3px;top:344.6px;width:1239px;height:64.3px;border:1px solid #dcdde0;background:#fff"></div>
<div class="a" style="left:319.3px;top:345.6px;width:1237px;height:31.7px;background:#f2f2f3;border-bottom:1px solid #dcdde0"></div>
<div class="a" style="left:565.6px;top:345px;width:1px;height:63px;background:#dcdde0"></div>
<div class="a" style="left:813.4000000000001px;top:345px;width:1px;height:63px;background:#dcdde0"></div>
<div class="a" style="left:1061.2px;top:345px;width:1px;height:63px;background:#dcdde0"></div>
<div class="a" style="left:1309.0px;top:345px;width:1px;height:63px;background:#dcdde0"></div>
<div class="a th" style="left:325.90000000000003px;top:352.8px;color:#4f5d73">Invoice Number</div>
<div class="a td" style="left:325.90000000000003px;top:385.0px">INV-48-5</div>
<div class="a th" style="right:793.8999999999999px;top:352.8px;color:#4f5d73">Invoice Amount</div>
<div class="a td" style="right:793.8999999999999px;top:385.0px"><svg class="rs" width="6.0" height="8.5" viewBox="0 0 6 8.5" preserveAspectRatio="none" style="margin-right:1.2px"><path d="M0.1 0.55 H5.9 M0.1 2.85 H5.9 M1.3 0.55 C4.7 0.55 5 5.3 1.1 5.3 M1.2 5.3 L4.8 8.45" fill="none" stroke="currentColor" stroke-width="1.05"/></svg>17,500.00</div>
<div class="a th" style="right:546.0999999999999px;top:352.8px;color:#4f5d73">Tax Amount</div>
<div class="a td" style="right:546.0999999999999px;top:385.0px"><svg class="rs" width="6.0" height="8.5" viewBox="0 0 6 8.5" preserveAspectRatio="none" style="margin-right:1.2px"><path d="M0.1 0.55 H5.9 M0.1 2.85 H5.9 M1.3 0.55 C4.7 0.55 5 5.3 1.1 5.3 M1.2 5.3 L4.8 8.45" fill="none" stroke="currentColor" stroke-width="1.05"/></svg>0.00</div>
<div class="a th" style="right:298.29999999999995px;top:352.8px;color:#4f5d73">Adjustment Amount</div>
<div class="a td" style="right:298.29999999999995px;top:385.0px"><svg class="rs" width="6.0" height="8.5" viewBox="0 0 6 8.5" preserveAspectRatio="none" style="margin-right:1.2px"><path d="M0.1 0.55 H5.9 M0.1 2.85 H5.9 M1.3 0.55 C4.7 0.55 5 5.3 1.1 5.3 M1.2 5.3 L4.8 8.45" fill="none" stroke="currentColor" stroke-width="1.05"/></svg>0.00</div>
<div class="a th" style="right:50.5px;top:352.8px;color:#4f5d73">Total Amount</div>
<div class="a td" style="right:50.5px;top:385.0px"><svg class="rs" width="6.0" height="8.5" viewBox="0 0 6 8.5" preserveAspectRatio="none" style="margin-right:1.2px"><path d="M0.1 0.55 H5.9 M0.1 2.85 H5.9 M1.3 0.55 C4.7 0.55 5 5.3 1.1 5.3 M1.2 5.3 L4.8 8.45" fill="none" stroke="currentColor" stroke-width="1.05"/></svg>17,500.00</div>
<svg style="left:0;top:0" width="1600" height="748"><circle cx="1477.4" cy="204.8" r="4.85" fill="none" stroke="#555" stroke-width="1.2"/><path d="M1481 208.5 L1486.2 213.7" stroke="#555" stroke-width="1.4"/><path d="M1506.3 202.9 H1521.5 M1509 207.2 H1519 M1512.2 211.4 H1515.7" stroke="#555" stroke-width="1.3"/><rect x="1540.4" y="201.2" width="3.9" height="11.7" fill="#5c5c5c"/><rect x="1545.9" y="201.2" width="4.1" height="11.7" fill="#5c5c5c"/><rect x="1551.5" y="201.2" width="4.2" height="11.7" fill="#5c5c5c"/></svg>
<div class="a" style="left:1596.1px;top:389.8px;width:45px;height:45px;border-radius:50%;background:#2f3848;box-shadow:0 1px 4px rgba(0,0,0,.15)"></div>
</body></html>
